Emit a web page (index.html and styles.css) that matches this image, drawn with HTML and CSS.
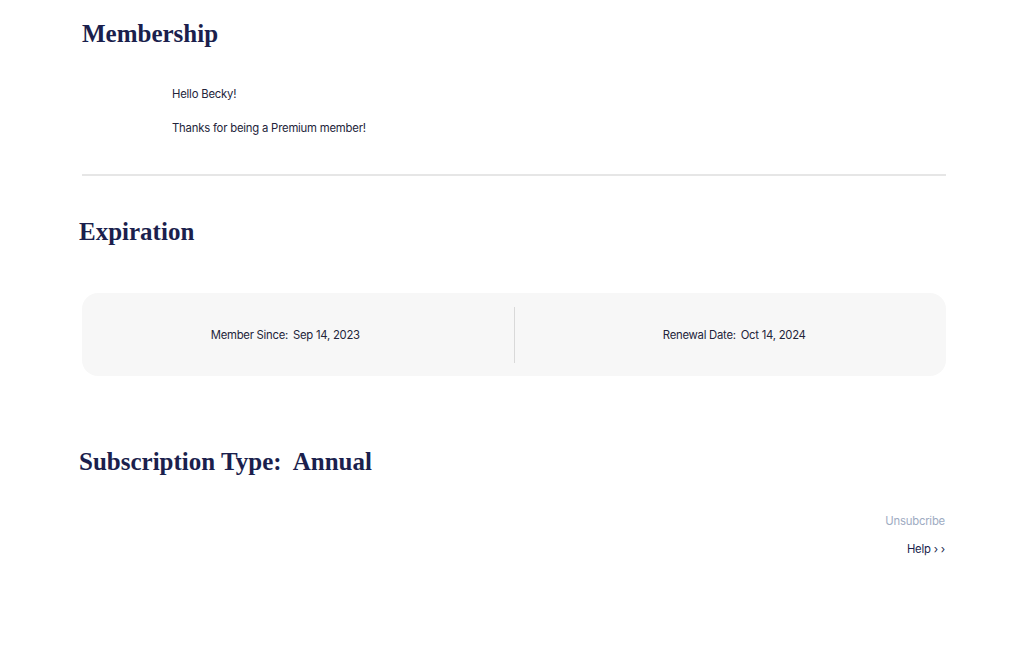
FILE: index.html
```html
<!DOCTYPE html>
<html>
<head>
<meta charset="utf-8">
<link rel="stylesheet" href="styles.css">
</head>
<body>
<main class="page">
  <section class="membership">
    <h1 class="title title-first">Membership</h1>
    <div class="greeting">
      <p class="line">Hello Becky!</p>
      <p class="line">Thanks for being a Premium member!</p>
    </div>
  </section>
  <hr class="divider">
  <section class="expiration">
    <h2 class="title title-shift">Expiration</h2>
    <div class="card">
      <div class="cell cell-left"><span class="label">Member Since:</span><span class="value">Sep 14, 2023</span></div>
      <div class="sep"></div>
      <div class="cell cell-right"><span class="label">Renewal Date:</span><span class="value">Oct 14, 2024</span></div>
    </div>
  </section>
  <section class="subscription">
    <h2 class="title title-shift">Subscription Type:&nbsp; Annual</h2>
    <div class="links">
      <a class="unsub">Unsubcribe</a>
      <a class="help">Help › ›</a>
    </div>
  </section>
</main>
</body>
</html>
```
FILE: styles.css
```css
* { box-sizing: border-box; }
html, body { margin: 0; padding: 0; background: #ffffff; }
body {
  font-family: "Inter", "Noto Sans", sans-serif;
  color: #23243a;
}
.page {
  width: 864px;
  margin-left: 82px;
  padding-top: 18px;
}
.title {
  margin: 0;
  font-family: "Liberation Serif", "DejaVu Serif", serif;
  font-weight: 700;
  font-size: 25px;
  line-height: 32px;
  color: #1b1f4d;
}
.title-shift { margin-left: -3px; }
.greeting {
  padding-left: 90px;
  padding-top: 36px;
  display: flex;
  flex-direction: column;
  gap: 18px;
}
.line {
  margin: 0;
  font-size: 11.3px;
  line-height: 16px;
  letter-spacing: -0.2px;
  color: #23243a;
}
.divider {
  margin: 38px 0 0 0;
  border: 0;
  border-top: 2px solid #e6e6e6;
  height: 0;
}
.expiration { padding-top: 40px; }
.card {
  margin-top: 45px;
  height: 83px;
  background: #f7f7f7;
  border-radius: 16px;
  display: grid;
  grid-template-columns: 1fr 1px 1fr;
  align-items: center;
}
.cell {
  display: flex;
  justify-content: center;
  gap: 5px;
  font-size: 11.3px;
  letter-spacing: -0.25px;
  color: #23243a;
}
.cell-left { padding-right: 25px; }
.cell-right { padding-left: 8px; }
.sep {
  width: 1px;
  height: 56px;
  background: #d9d9d9;
}
.subscription { padding-top: 70px; }
.links {
  margin-top: 35px;
  display: flex;
  flex-direction: column;
  align-items: flex-end;
  gap: 12px;
  padding-right: 1px;
}
.unsub {
  font-size: 11.3px;
  line-height: 16px;
  color: #9eabc2;
  letter-spacing: -0.2px;
}
.help {
  font-size: 11.3px;
  line-height: 16px;
  color: #1b1f4d;
  letter-spacing: -0.2px;
}
```
